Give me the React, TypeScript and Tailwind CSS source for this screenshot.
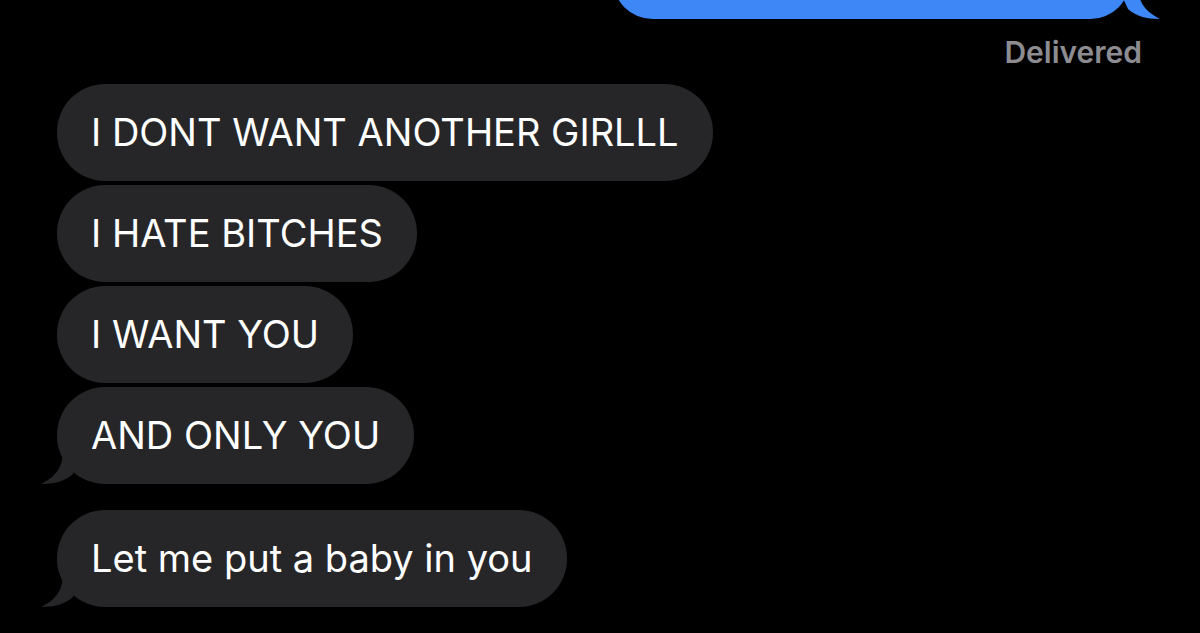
import React from 'react';

const font = { fontFamily: 'Inter, "Noto Sans", sans-serif' };

const LeftTail = () => (
  <svg className="absolute left-[-16px] bottom-0" width="40" height="36" viewBox="0 0 40 36">
    <path d="M22 0 C22 14 20 26 0 36 C14 36 24 33 32 26 L40 0 Z" fill="#262629" />
  </svg>
);

const Incoming = ({ text, tail }: { text: string; tail?: boolean }) => (
  <div className="relative self-start">
    {tail && <LeftTail />}
    <div className="relative h-[97px] rounded-[48px] bg-[#262629] pl-[34px] pr-[34px] flex items-center text-white text-[38px]">
      {text}
    </div>
  </div>
);

export default function App() {
  return (
    <div className="w-[1200px] h-[633px] bg-black overflow-hidden" style={font}>
      {/* outgoing bubble, cut off at top */}
      <div className="flex justify-end pr-[70px]">
        <div className="relative mt-[-60px]">
          <div className="w-[517px] h-[79px] rounded-[40px] bg-[#3d87f6]" />
          <svg className="absolute right-[-30px] bottom-0" width="44" height="36" viewBox="0 0 44 36">
            <path d="M22 0 C22 14 24 26 44 36 C30 36 20 33 12 26 L0 0 Z" fill="#3d87f6" />
          </svg>
        </div>
      </div>

      <div className="flex justify-end pr-[58px] mt-[16px]">
        <span className="text-[30px] font-semibold text-[#8c8c91] leading-[34px]">Delivered</span>
      </div>

      <div className="flex flex-col gap-[4px] pl-[57px] mt-[15px]">
        <Incoming text="I DONT WANT ANOTHER GIRLLL" />
        <Incoming text="I HATE BITCHES" />
        <Incoming text="I WANT YOU" />
        <Incoming text="AND ONLY YOU" tail />
        <div className="h-[18px]" />
        <Incoming text="Let me put a baby in you" tail />
      </div>
    </div>
  );
}
